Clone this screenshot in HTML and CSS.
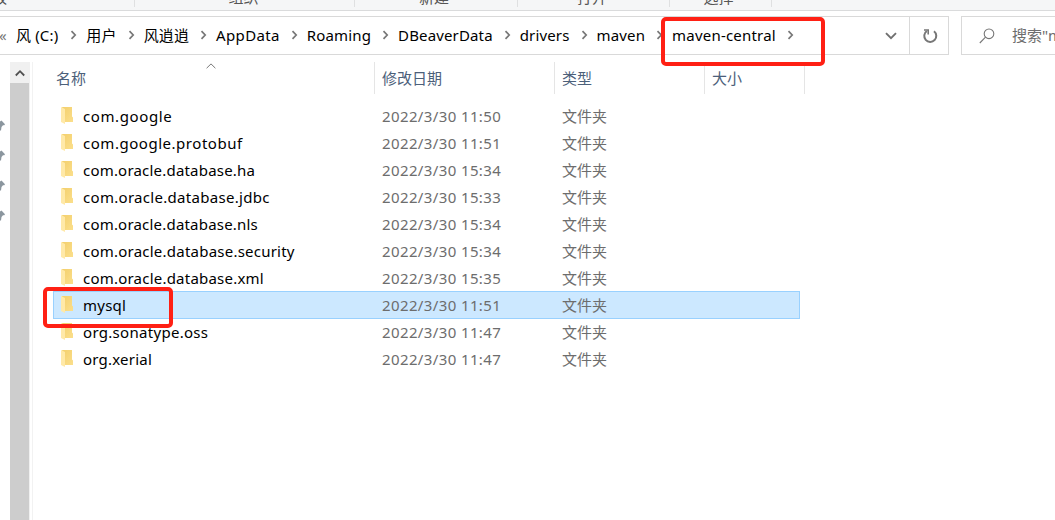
FILE: index.html
```html
<!DOCTYPE html>
<html lang="zh">
<head>
    <meta charset="UTF-8">
    <meta name="viewport" content="width=device-width, initial-scale=1.0">
    <title>maven-central</title>
    <link rel="stylesheet" href="styles.css">
</head>
<body>
    <svg class="symbols">
        <defs>
            <linearGradient id="folderFill" x1="0" y1="0" x2="1" y2="1">
                <stop offset="0" stop-color="#f3cf6c"/>
                <stop offset="1" stop-color="#fbdf8c"/>
            </linearGradient>
            <symbol id="folder" viewBox="0 0 13 18">
                <path d="M1 0h10v9.500l1 1V15H4z" fill="url(#folderFill)"/>
                <path d="M0 0l4 2V17L0 15z" fill="#ffe9a8"/>
            </symbol>
            <symbol id="chevron" viewBox="0 0 8 10">
                <path d="M1.500 1.200L5.200 5 1.500 8.800" fill="none" stroke="#777" stroke-width="1.700"/>
            </symbol>
            <symbol id="pin" viewBox="0 0 6 12">
                <path d="M0 1.500L1.500 .5 5 4.300 4.300 5.200 3 5.300 1.500 7 1 10.500H0z" fill="#8b969e"/>
            </symbol>
        </defs>
    </svg>

    <div class="ribbon">
        <div class="group clipboard">剪贴板</div>
        <div class="group organize">组织</div>
        <div class="group new">新建</div>
        <div class="group open">打开</div>
        <div class="group select">选择</div>
    </div>

    <div class="toolbar">
        <div class="address">
            <span class="overflow">«</span>
            <span class="crumb drive">风 (C:)</span>
            <svg class="sep"><use href="#chevron"/></svg>
            <span class="crumb">用户</span>
            <svg class="sep"><use href="#chevron"/></svg>
            <span class="crumb">风逍逍</span>
            <svg class="sep"><use href="#chevron"/></svg>
            <span class="crumb wide">AppData</span>
            <svg class="sep"><use href="#chevron"/></svg>
            <span class="crumb">Roaming</span>
            <svg class="sep"><use href="#chevron"/></svg>
            <span class="crumb">DBeaverData</span>
            <svg class="sep"><use href="#chevron"/></svg>
            <span class="crumb">drivers</span>
            <svg class="sep"><use href="#chevron"/></svg>
            <span class="crumb">maven</span>
            <svg class="sep"><use href="#chevron"/></svg>
            <span class="crumb current">maven-central<i class="mark mark-path"></i></span>
            <svg class="sep"><use href="#chevron"/></svg>
            <svg class="dropdown" viewBox="0 0 12 8">
                <path d="M1 1.200L6 6.200 11 1.200" fill="none" stroke="#707070" stroke-width="1.900"/>
            </svg>
            <div class="refresh">
                <svg width="16" height="16" viewBox="0 0 16 16" fill="none" stroke="#777" stroke-width="2">
                    <path d="M12 3.200A6 6 0 1 1 4.800 3"/>
                    <path d="M2 2H6.200V6.500" stroke-width="1.600"/>
                </svg>
            </div>
        </div>
        <div class="search">
            <svg width="16" height="16" viewBox="0 0 16 16" fill="none" stroke="#777" stroke-width="1.100">
                <circle cx="10" cy="5.800" r="4.800"/>
                <path d="M6.500 9.200L.8 15"/>
            </svg>
            <span>搜索"maven-central"</span>
        </div>
    </div>

    <div class="main">
        <div class="nav">
            <svg><use href="#pin"/></svg>
            <svg><use href="#pin"/></svg>
            <svg><use href="#pin"/></svg>
            <svg><use href="#pin"/></svg>
        </div>
        <div class="scrollbar">
            <div class="scroll-up">
                <svg width="10" height="8" viewBox="0 0 10 8"><path d="M.8 6.500L5 2.200 9.200 6.500" fill="none" stroke="#505050" stroke-width="1.800"/></svg>
            </div>
            <div class="scroll-thumb"></div>
        </div>
        <div class="files">
            <div class="columns header">
                <div class="name">名称
                    <svg class="sort" viewBox="0 0 10 6"><path d="M.6 5.200L5 .9 9.400 5.200" fill="none" stroke="#777"/></svg>
                </div>
                <div>修改日期</div>
                <div>类型</div>
                <div>大小</div>
            </div>
            <div class="list" id="list"></div>
        </div>
    </div>

    <script>
        // name, modified, letter spacing
        const folders = [
            ['com.google', '2022/3/30 11:50', 0.6],
            ['com.google.protobuf', '2022/3/30 11:51', 0.53],
            ['com.oracle.database.ha', '2022/3/30 15:34', 0.2],
            ['com.oracle.database.jdbc', '2022/3/30 15:33', 0.3],
            ['com.oracle.database.nls', '2022/3/30 15:34', 0.2],
            ['com.oracle.database.security', '2022/3/30 15:34', 0.23],
            ['com.oracle.database.xml', '2022/3/30 15:35', 0.22],
            ['mysql', '2022/3/30 11:51', 0.25],
            ['org.sonatype.oss', '2022/3/30 11:47', 0.3],
            ['org.xerial', '2022/3/30 11:47', 0.22]
        ];
        const selected = 'mysql';

        document.getElementById('list').innerHTML = folders.map(([name, date, spacing]) => `
            <div class="columns row ${name === selected ? 'selected' : ''}">
                <div class="name"><svg class="folder"><use href="#folder"/></svg><span style="letter-spacing: ${spacing}px">${name}</span></div>
                <div class="date">${date}</div>
                <div>文件夹</div>
                <div></div>
                ${name === selected ? '<i class="mark mark-row"></i>' : ''}
            </div>`).join('');
    </script>
</body>
</html>
```

FILE: styles.css
```css
* {
    box-sizing: border-box;
}

body {
    margin: 0;
    height: 520px;
    overflow: hidden;
    background: #fff;
    color: #000;
    font-family: "Noto Sans", "Noto Sans CJK SC", sans-serif;
    font-size: 15px;
    line-height: 20px;
}

svg {
    display: block;
    flex-shrink: 0;
}

.symbols {
    width: 0;
    height: 0;
}

/* ribbon */
.ribbon {
    display: flex;
    height: 11px;
    background: #f5f6f7;
    border-bottom: 1px solid #dadbdc;
    overflow: hidden;
    color: #555;
}

.group {
    flex-shrink: 0;
    height: 7px;
    border-right: 1px solid #dfe0e1;
    display: flex;
    align-items: flex-end;
    justify-content: center;
    line-height: 19px;
}

.clipboard {
    width: 300px;
    margin-left: -165px;
}

.organize {
    width: 220px;
    padding-right: 2px;
}

.new {
    width: 163px;
    padding-right: 4px;
}

.open {
    width: 152px;
    padding-right: 3px;
}

.select {
    width: 102px;
    padding-right: 4px;
}

/* address bar */
.toolbar {
    display: flex;
    gap: 12px;
    margin-top: 5px;
    height: 39px;
}

.address {
    display: flex;
    align-items: center;
    width: 949px;
    border: 1px solid #d9d9d9;
    border-left: 0;
    white-space: nowrap;
}

.overflow {
    width: 17px;
    margin-left: -1px;
    color: #777;
}

.crumb,
.overflow {
    margin-bottom: 2px;
}

.crumb {
    letter-spacing: 0.15px;
}

.drive {
    margin-right: 1px;
}

.wide {
    letter-spacing: 0.35px;
}

.sep {
    width: 8px;
    height: 10px;
    margin: 0 8px 2px 11px;
}

.current {
    position: relative;
    letter-spacing: 0.2px;
}

.dropdown {
    width: 12px;
    height: 8px;
    margin-left: auto;
    margin-right: 12px;
}

.refresh {
    width: 40px;
    height: 37px;
    margin-right: -1px;
    border-left: 1px solid #d9d9d9;
    display: flex;
    align-items: center;
    justify-content: center;
}

.search {
    flex: 1;
    display: flex;
    align-items: center;
    gap: 17px;
    padding-left: 17px;
    border: 1px solid #d9d9d9;
    border-right: 0;
    overflow: hidden;
    white-space: nowrap;
    color: #6d6d6d;
}

.search span {
    margin-bottom: 2px;
}

/* panes */
.main {
    display: flex;
    height: 458px;
    margin-top: 7px;
}

.nav {
    width: 10px;
    padding-top: 58px;
}

.nav svg {
    width: 6px;
    height: 12px;
    margin-bottom: 18px;
}

.scrollbar {
    width: 20px;
    background: #f0f0f0;
}

.scroll-up {
    height: 21px;
    display: flex;
    align-items: center;
    justify-content: center;
}

.scroll-thumb {
    width: 19px;
    height: 437px;
    background: #cdcdcd;
}

.files {
    flex: 1;
    margin-left: 2px;
    border-left: 1px solid #f2f2f2;
    padding-left: 20px;
}

.columns {
    display: grid;
    grid-template-columns: 322px 180px 150px 95px;
    width: 747px;
}

.header {
    grid-template-columns: 322px 180px 150px 100px;
    width: 752px;
    height: 32px;
    color: #4c607a;
}

.header > div {
    padding: 6px 0 0 7px;
    border-right: 1px solid #e5e5e5;
}

.header .name {
    position: relative;
    padding-left: 3px;
}

.sort {
    position: absolute;
    left: 153px;
    top: 1px;
    width: 10px;
    height: 6px;
}

.list {
    margin-top: 8px;
}

.row {
    height: 27px;
    line-height: 28px;
    color: #6d6d6d;
}

.row > div {
    padding-left: 7px;
}

.row .name {
    display: flex;
    gap: 9px;
    padding-left: 8px;
    color: #000;
}

.date {
    letter-spacing: 0.38px;
}

.folder {
    width: 13px;
    height: 18px;
    margin-top: 5px;
}

.selected {
    position: relative;
    background: #cce8ff;
    box-shadow: inset 0 0 0 1px #99d1ff;
    height: 28px;
    margin-bottom: -1px;
}

/* red annotation boxes */
.mark {
    position: absolute;
    border: 4px solid #ff2014;
    border-radius: 5px;
}

.mark-path {
    left: -11px;
    top: -8px;
    width: 164px;
    height: 49px;
}

.mark-row {
    left: -10px;
    top: -4px;
    width: 130px;
    height: 41px;
    z-index: 1;
}
```
